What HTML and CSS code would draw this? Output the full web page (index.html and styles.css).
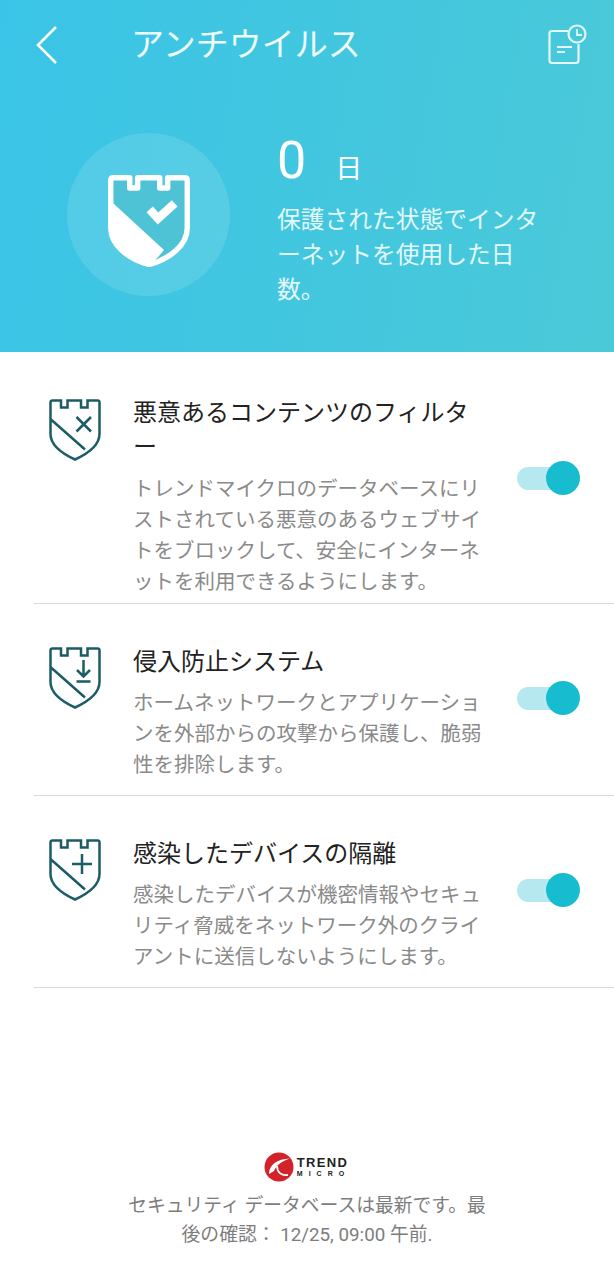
FILE: index.html
```html
<!DOCTYPE html>
<html lang="ja">
<head>
  <meta charset="UTF-8">
  <meta name="viewport" content="width=device-width, initial-scale=1.0">
  <title>アンチウイルス</title>
  <link rel="stylesheet" href="styles.css">
</head>
<body>
  <div class="page">
    <header class="header">
      <div class="topbar">
        <svg class="back-icon" width="24" height="38" viewBox="0 0 24 38">
          <path d="M21 1 L3 19 L21 37" fill="none" stroke="#fff" stroke-width="2.6"/>
        </svg>
        <h1 class="title">アンチウイルス</h1>
        <svg class="history-icon" width="40" height="42" viewBox="0 0 40 42">
          <path d="M21 7 H5 Q2.5 7 2.5 9.5 V36.5 Q2.5 39 5 39 H29 Q31.5 39 31.5 36.5 V20" fill="none" stroke="#e4f8fb" stroke-width="2.2"/>
          <circle cx="30" cy="10" r="8.5" fill="none" stroke="#e4f8fb" stroke-width="2.2"/>
          <path d="M30 5 V11 H35" fill="none" stroke="#e4f8fb" stroke-width="1.8"/>
          <path d="M10 23 H25 M10 28 H18" fill="none" stroke="#e4f8fb" stroke-width="1.8"/>
        </svg>
      </div>
      <div class="hero">
        <div class="hero-circle">
          <svg class="hero-shield" width="82" height="92" viewBox="0 0 82 92">
            <path d="M5.5 2.75 H21.7 V13 H29.7 V2.75 H51.7 V13 H59.7 V2.75 H76.5 Q79.25 2.75 79.25 5.5 V53 C79.25 70 62 84 41 89.5 C20 84 2.75 70 2.75 53 V5.5 Q2.75 2.75 5.5 2.75 Z" fill="#4fc3d6" stroke="#fff" stroke-width="5.4" stroke-linejoin="round"/>
            <path d="M2.75 26 L56 75 C52 80 47 86 41 89.5 C20 84 2.75 70 2.75 53 Z" fill="#fff"/>
            <path d="M41.7 34.3 L50 43.5 L66.7 28.3" fill="none" stroke="#fff" stroke-width="8.5"/>
          </svg>
        </div>
        <div class="hero-text">
          <div class="days"><span class="days-num">0</span><span class="days-unit">日</span></div>
          <p class="hero-desc">保護された状態でインタ<br>ーネットを使用した日<br>数。</p>
        </div>
      </div>
    </header>

    <main class="list">
      <section class="row row-first">
        <svg class="row-icon" width="52" height="62" viewBox="0 0 52 62">
          <path d="M3.5 1.5 H12 V8.5 H18.5 V1.5 H32 V8.5 H38.5 V1.5 H48.5 Q50.5 1.5 50.5 3.5 V35 C50.5 46 38 55 26 60.5 C14 55 1.5 46 1.5 35 V3.5 Q1.5 1.5 3.5 1.5 Z M2 20.5 L36 50.5 M27.5 18 L42 32.5 M42 18 L27.5 32.5" fill="none" stroke="#1c5c66" stroke-width="2.5"/>
        </svg>
        <div class="row-text">
          <h2 class="row-title">悪意あるコンテンツのフィルタ<br>ー</h2>
          <p class="row-desc">トレンドマイクロのデータベースにリ<br>ストされている悪意のあるウェブサイ<br>トをブロックして、安全にインターネ<br>ットを利用できるようにします。</p>
        </div>
        <div class="toggle"><span class="knob"></span></div>
      </section>

      <section class="row">
        <svg class="row-icon" width="52" height="62" viewBox="0 0 52 62">
          <path d="M3.5 1.5 H12 V8.5 H18.5 V1.5 H32 V8.5 H38.5 V1.5 H48.5 Q50.5 1.5 50.5 3.5 V35 C50.5 46 38 55 26 60.5 C14 55 1.5 46 1.5 35 V3.5 Q1.5 1.5 3.5 1.5 Z M2 20.5 L36 50.5 M34.5 13 V29 M28 23 L34.5 29.5 L41 23 M27.5 34.5 H41.5" fill="none" stroke="#1c5c66" stroke-width="2.5"/>
        </svg>
        <div class="row-text">
          <h2 class="row-title">侵入防止システム</h2>
          <p class="row-desc">ホームネットワークとアプリケーショ<br>ンを外部からの攻撃から保護し、脆弱<br>性を排除します。</p>
        </div>
        <div class="toggle"><span class="knob"></span></div>
      </section>

      <section class="row">
        <svg class="row-icon" width="52" height="62" viewBox="0 0 52 62">
          <path d="M3.5 1.5 H12 V8.5 H18.5 V1.5 H32 V8.5 H38.5 V1.5 H48.5 Q50.5 1.5 50.5 3.5 V35 C50.5 46 38 55 26 60.5 C14 55 1.5 46 1.5 35 V3.5 Q1.5 1.5 3.5 1.5 Z M2 20.5 L36 50.5 M33 15 V35 M23 25 H43" fill="none" stroke="#1c5c66" stroke-width="2.5"/>
        </svg>
        <div class="row-text">
          <h2 class="row-title">感染したデバイスの隔離</h2>
          <p class="row-desc">感染したデバイスが機密情報やセキュ<br>リティ脅威をネットワーク外のクライ<br>アントに送信しないようにします。</p>
        </div>
        <div class="toggle"><span class="knob"></span></div>
      </section>
    </main>

    <footer class="footer">
      <div class="logo">
        <svg width="30" height="30" viewBox="0 0 30 30">
          <circle cx="15" cy="15" r="14.5" fill="#d3222a"/>
          <path d="M5 22 C5 13 13 7 26 6.5 C18 9 12.5 13 10 19 Z" fill="#fff"/>
          <path d="M13 14 C13 20 17 24 24 23" fill="none" stroke="#fff" stroke-width="1.8"/>
        </svg>
        <div class="logo-text">
          <span class="logo-trend">TREND</span>
          <span class="logo-micro">MICRO</span>
        </div>
      </div>
      <p class="footer-text">セキュリティ データベースは最新です。最<br>後の確認： 12/25, 09:00 午前.</p>
    </footer>
  </div>
</body>
</html>
```

FILE: styles.css
```css
* {
  box-sizing: border-box;
}

body {
  margin: 0;
  background: #fff;
  font-family: Roboto, "Noto Sans CJK JP", sans-serif;
}

h1, h2, p {
  margin: 0;
  font-weight: 400;
}

.page {
  display: flex;
  flex-direction: column;
  height: 1280px;
}

/* header */
.header {
  height: 352px;
  padding-top: 22px;
  background: linear-gradient(100deg, #3ac4e7 0%, #4ac9d8 100%);
  color: #fff;
}

.topbar {
  display: flex;
  align-items: center;
  height: 46px;
  padding-left: 35px;
}

.title {
  margin-left: 72px;
  font-size: 33px;
  line-height: 46px;
  color: #eefbfc;
}

.history-icon {
  margin-left: auto;
  margin-right: 27px;
}

.hero {
  display: flex;
  padding: 65px 0 0 67px;
}

.hero-circle {
  display: flex;
  align-items: center;
  justify-content: center;
  width: 163px;
  height: 163px;
  border-radius: 50%;
  background: rgba(255, 255, 255, 0.12);
}

.hero-shield {
  margin-top: 13px;
}

.hero-text {
  margin-left: 47px;
}

.days {
  display: flex;
  align-items: baseline;
  height: 60px;
  margin-top: -2px;
}

.days-num {
  font-size: 52px;
  line-height: 60px;
}

.days-unit {
  margin-left: 29px;
  font-size: 27px;
}

.hero-desc {
  margin-top: 12px;
  font-size: 23.75px;
  line-height: 35px;
  color: #e4f8fb;
}

/* rows */
.list {
  padding-top: 4px;
}

.row {
  display: flex;
  align-items: center;
  position: relative;
  margin-left: 34px;
  padding: 41px 0 14px 99px;
  border-bottom: 1px solid #d9d9d9;
}

.row-first {
  padding: 40px 0 5px 99px;
}

.row-icon {
  position: absolute;
  left: 15px;
  top: 43px;
}

.row-text {
  width: 384px;
}

.row-title {
  font-size: 24px;
  line-height: 34px;
  color: #222;
}

.row-desc {
  margin-top: 9px;
  font-size: 20.5px;
  line-height: 31px;
  color: #8a8a8a;
}

.row-first .row-desc {
  margin-top: 10px;
}

.toggle {
  position: relative;
  width: 48px;
  height: 23px;
  margin-bottom: 30px;
  border-radius: 12px;
  background: #b6e9ef;
}

.row-first .toggle {
  margin-bottom: 38px;
}

.knob {
  position: absolute;
  right: -15px;
  top: -6px;
  width: 34px;
  height: 34px;
  border-radius: 50%;
  background: #17bccf;
}

/* footer */
.footer {
  margin-top: auto;
  padding-bottom: 30px;
  text-align: center;
}

.logo {
  display: flex;
  align-items: center;
  justify-content: center;
  gap: 3px;
  height: 30px;
  margin-bottom: 10px;
}

.logo-text {
  display: flex;
  flex-direction: column;
  font-family: "Liberation Sans", sans-serif;
  font-weight: 700;
  color: #222;
  text-align: left;
}

.logo-trend {
  font-size: 13px;
  line-height: 13px;
  letter-spacing: 1.3px;
}

.logo-micro {
  font-size: 7px;
  line-height: 9px;
  letter-spacing: 6px;
}

.footer-text {
  font-size: 18.8px;
  line-height: 29px;
  color: #7d7d7d;
}
```
